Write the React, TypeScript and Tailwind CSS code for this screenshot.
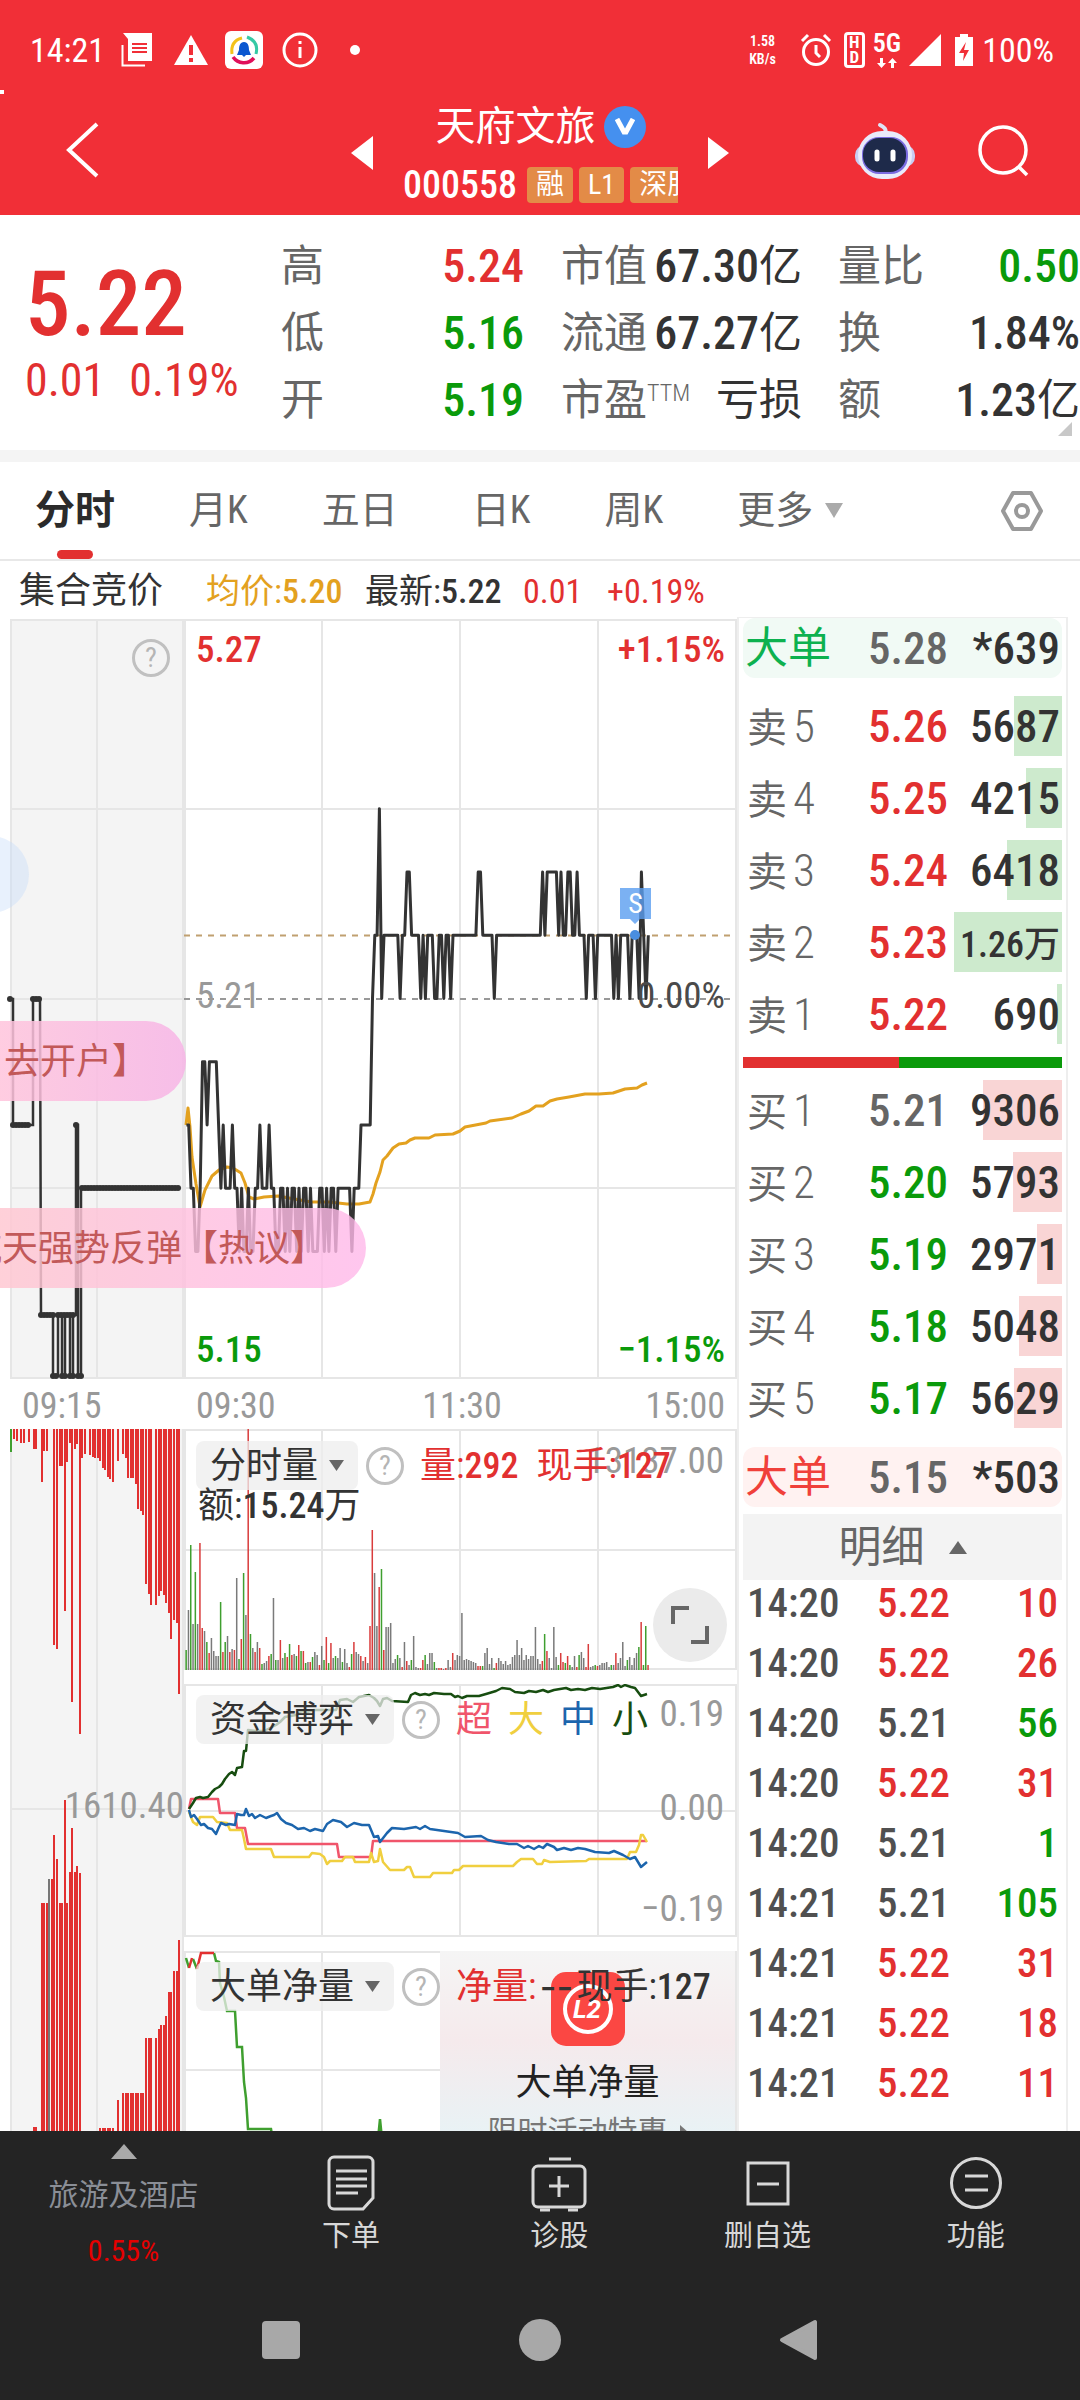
import type { ReactNode } from "react";

const RED = "#e23030";
const INK = "#333333";
const GRID = "#e6e6e6";

const stats = [
  { label: "高", value: "5.24", tone: "text-[#e23030]" },
  { label: "低", value: "5.16", tone: "text-[#0a9a0a]" },
  { label: "开", value: "5.19", tone: "text-[#0a9a0a]" },
];

const capStats = [
  { label: "市值", value: "67.30", unit: "亿" },
  { label: "流通", value: "67.27", unit: "亿" },
  { label: "市盈", sup: "TTM", value: "", unit: "亏损" },
];

const tradeStats = [
  { label: "量比", value: "0.50", unit: "", tone: "text-[#0a9a0a]" },
  { label: "换", value: "1.84%", unit: "", tone: "text-[#333333]" },
  { label: "额", value: "1.23", unit: "亿", tone: "text-[#333333]" },
];

const tabs = ["分时", "月K", "五日", "日K", "周K"];

const asks = [
  { label: "卖5", price: "5.26", volume: "5687", depth: 48 },
  { label: "卖4", price: "5.25", volume: "4215", depth: 36 },
  { label: "卖3", price: "5.24", volume: "6418", depth: 55 },
  { label: "卖2", price: "5.23", volume: "1.26万", depth: 108 },
  { label: "卖1", price: "5.22", volume: "690", depth: 5 },
];

const bids = [
  { label: "买1", price: "5.21", volume: "9306", depth: 79 },
  { label: "买2", price: "5.20", volume: "5793", depth: 49 },
  { label: "买3", price: "5.19", volume: "2971", depth: 25 },
  { label: "买4", price: "5.18", volume: "5048", depth: 43 },
  { label: "买5", price: "5.17", volume: "5629", depth: 48 },
];

const ticks = [
  { time: "14:20", price: "5.22", volume: 10, side: "buy" },
  { time: "14:20", price: "5.22", volume: 26, side: "buy" },
  { time: "14:20", price: "5.21", volume: 56, side: "sell" },
  { time: "14:20", price: "5.22", volume: 31, side: "buy" },
  { time: "14:20", price: "5.21", volume: 1, side: "sell" },
  { time: "14:21", price: "5.21", volume: 105, side: "sell" },
  { time: "14:21", price: "5.22", volume: 31, side: "buy" },
  { time: "14:21", price: "5.22", volume: 18, side: "buy" },
  { time: "14:21", price: "5.22", volume: 11, side: "buy" },
];

// one digit per minute from 09:30, in ticks of 0.01 above 5.15
const minutePrices =
  "4433223554" + "5555434333" + "4332322322" + "3343334332" + "2332323323" +
  "2332322233" + "2323323333" + "3323334444" + "4677967777" + "7776778877" +
  "7767677766" + "7767767777" + "7777777887" + "7777677777" + "7777777777" +
  "7777787888" + "8878778877" + "8777677767" + "7777776767" + "7776777687" + "67";

const TICK = 63.25;
const minuteX = (m: number) => 2.4 + m * 2.298;
const pricePoints = minutePrices
  .split("")
  .map((t, m) => `${minuteX(m).toFixed(1)},${(759 - Number(t) * TICK).toFixed(1)}`)
  .join(" ");

const averagePoints =
  "2,506 4,489 6,508 8,538 12,565 16,588 21,571 28,557 35,551 43,548 49,549 57,554 61,564 65,578 70,580 80,578 94,577 127,583 145,583 163,585 175,585 186,583 189,575 192,564 196,553 199,541 203,537 209,529 215,525 222,524 226,521 231,519 245,519 251,516 269,515 276,512 281,508 302,504 306,502 328,499 337,495 345,492 352,487 359,487 366,482 373,480 385,478 401,475 415,475 429,474 441,470 453,469 458,466 463,464";

// colour letter and bar height for each minute
const minuteVolumes =
  "g20 k60 g125 k46 g98 k46 r127 r42 k39 g28 r17 k32 k19 k14 k14 g68 r18 g28 k34 r18 k21 r20 k92 g11 r31 g97 k55 r241 g36 k22 r18 k28 r22 g6 k7 k9 r14 g16 k72 g10 " +
  "k10 r30 k12 g17 r13 g26 r15 k16 g14 r25 g19 r19 g7 k8 r8 g13 k18 k15 r5 k24 g10 r33 g7 r27 k12 g14 k12 k22 g8 k21 k7 r3 g16 r28 k18 k16 r14 k9 r13 k7 " +
  "r44 r140 k97 k44 r83 g101 r20 k43 k43 k47 k7 k11 g15 k12 r3 k28 r9 k5 g10 k34 k3 k2 r2 r10 g15 k6 k17 k17 g8 k2 r2 r2 k1 r2 k10 k3 r17 k10 k15 k14 " +
  "k57 k10 k11 k10 k9 k8 k7 r4 r4 g4 k17 k22 k6 k12 g2 r7 k12 k9 k6 k9 k5 k6 k13 k15 k30 k15 k22 k10 k15 k11 k14 k14 k43 k11 k6 r9 g36 r19 k12 k2 " +
  "k43 k13 g5 r17 r8 g7 r14 g5 k3 k14 r3 g15 k18 k12 r3 r26 k3 k4 g5 r4 k5 k7 k7 k8 k3 g5 k5 r17 k7 k12 k28 k4 g10 k13 k5 k12 k17 g23 r48 g5 g44 r5";

const barColor: Record<string, string> = { r: "#d93c3c", g: "#3f9f2f", k: "#7a7a7a" };

// x position and length of the bars that hang from the top of the auction pane
const auctionTop = [
  [0, 23], [3, 10], [6, 12], [10, 14], [13, 14], [18, 13], [23, 20], [25, 20], [31, 53], [33, 22], [36, 22],
  [43, 216], [46, 220], [49, 37], [51, 37], [54, 182], [56, 33], [59, 14], [61, 273], [64, 20], [66, 15], [69, 305],
  [71, 29], [74, 25], [79, 26], [82, 28], [84, 29], [87, 29], [89, 32], [92, 39], [94, 41], [97, 48], [99, 50], [102, 53],
  [107, 32], [112, 25], [115, 29], [117, 49], [120, 49], [122, 49], [125, 55], [127, 80], [130, 82], [132, 86],
  [135, 155], [138, 165], [140, 176], [145, 176], [148, 167], [150, 162], [153, 166], [155, 174], [158, 184],
  [160, 210], [163, 191], [166, 194], [168, 265],
];

// x position and height of the bars that stand on its floor
const auctionBottom = [
  [23, 4], [25, 4], [31, 228], [33, 228], [36, 228], [38, 252], [41, 252], [43, 296], [46, 272], [49, 228], [51, 228],
  [54, 331], [56, 228], [59, 259], [61, 303], [64, 259], [66, 265], [69, 258],
  [89, 3], [92, 3], [94, 3], [97, 3], [99, 3], [102, 3], [107, 31],
  [112, 38], [115, 38], [117, 38], [120, 38], [122, 38], [125, 38], [127, 38], [130, 38], [132, 38],
  [135, 93], [138, 93], [140, 93], [145, 93], [148, 102], [150, 106], [153, 106], [155, 115], [158, 139],
  [160, 139], [163, 160], [166, 160], [168, 191],
];

const flowLines = [
  {
    color: "#f0556b",
    points: "5,125 7,115 34,115 36,129 51,129 53,144 61,144 64,160 153,160 155,173 187,173 189,157 463,157",
  },
  {
    color: "#f0cf3f",
    points:
      "5,128 9,138 13,141 16,133 29,133 33,138 43,139 46,146 58,146 60,155 62,165 87,165 90,173 125,173 128,169 136,170 140,173 143,180 146,177 158,177 161,173 169,173 171,178 185,178 187,169 190,178 194,177 196,165 199,178 206,186 220,186 223,183 226,183 230,193 246,193 249,189 268,189 270,186 275,186 279,182 329,182 333,178 337,175 349,175 353,180 358,180 360,176 366,178 402,177 405,175 443,175 446,168 452,168 455,161 457,151 459,151 463,158",
  },
  {
    color: "#1c65ad",
    points:
      "5,126 7,133 10,131 13,135 17,141 20,140 24,144 28,145 32,150 35,143 37,139 42,141 45,140 51,141 53,130 57,131 60,131 62,125 65,132 68,130 71,134 76,131 82,134 87,132 90,131 93,129 97,135 102,139 108,141 114,145 120,144 126,147 131,145 139,147 143,140 149,136 157,138 163,143 170,139 178,141 185,141 190,153 194,152 196,158 203,149 208,144 220,145 232,143 236,145 241,142 246,145 260,147 274,149 281,153 297,152 304,156 312,158 325,160 333,160 340,164 344,162 350,165 355,162 359,164 363,160 370,163 373,166 380,164 387,166 394,164 401,165 411,168 425,169 430,167 439,171 446,175 451,173 457,183 463,178",
  },
  {
    color: "#174d10",
    points:
      "5,125 9,119 12,114 16,113 19,114 24,113 28,108 31,105 35,103 38,100 41,95 45,90 48,88 51,91 53,84 58,83 60,67 62,67 64,46 72,47 80,47 86,44 92,41 96,38 101,33 112,31 118,27 123,28 130,26 142,26 152,26 156,16 163,15 169,18 175,13 180,12 185,11 190,14 193,17 196,22 199,15 203,14 208,17 224,18 227,11 231,9 236,11 241,10 245,11 250,9 260,10 267,10 271,13 274,12 278,14 283,12 295,12 302,10 312,7 318,4 326,5 331,8 340,9 345,7 352,8 359,6 364,8 370,6 376,5 382,4 387,6 394,5 401,6 408,4 416,5 429,3 434,1 437,3 441,1 447,3 451,4 454,8 457,12 460,11 463,10",
  },
];

function Triangle({ dir = "down", className }: { dir?: "up" | "down" | "left" | "right"; className?: string }) {
  const d = {
    up: "M5 0 10 10H0z",
    down: "M0 0h10L5 10z",
    left: "M10 0v10L0 5z",
    right: "M0 0v10l10-5z",
  }[dir];
  return (
    <svg viewBox="0 0 10 10" preserveAspectRatio="none" className={className} fill="currentColor" aria-hidden="true">
      <path d={d} />
    </svg>
  );
}

function Help() {
  return (
    <button
      type="button"
      aria-label="说明"
      className="flex size-[38px] shrink-0 items-center justify-center rounded-full border-[3px] border-[#c0c0c0] text-[28px] leading-none text-[#b5b5b5]"
    >
      ?
    </button>
  );
}

function PaneMenu({ children }: { children: ReactNode }) {
  return (
    <button
      type="button"
      className="flex h-[49px] shrink-0 items-center gap-[11px] rounded-lg bg-[#eeeeee]/75 px-[14px] text-4xl leading-none text-[#333333]"
    >
      {children}
      <Triangle className="h-[11px] w-[15px] text-[#666666]" />
    </button>
  );
}

function Grid({ height, dashed }: { height: number; dashed?: boolean }) {
  return (
    <g stroke={GRID} strokeWidth="2">
      <path d={`M0 1H553M0 ${height - 1}H553M1 0V${height}M138 0V${height}M276 0V${height}M414 0V${height}M552 0V${height}`} />
      <path d={dashed ? `M0 190H553M0 569H553` : `M0 ${Math.round(height / 2)}H553`} />
    </g>
  );
}

function StatusBar() {
  return (
    <div className="flex h-[100px] items-center justify-between pr-[26px] pl-[30px] text-[34px] leading-none">
      <div className="flex items-center">
        <span>14:21</span>
        <svg viewBox="0 0 32 34" className="ml-4 h-[34px] w-8" aria-hidden="true">
          <path d="M2 0h29v28H7V6z" fill="#fff" />
          <path d="M1.500 12v20.500H24" fill="none" stroke="#fff" strokeWidth="2" />
          <path d="M11 11h15M11 15h15M11 19h15" stroke="#f12f37" strokeWidth="2" />
        </svg>
        <svg viewBox="0 0 36 32" className="ml-5 h-8 w-9" aria-hidden="true">
          <path d="M18 1 35 31H1z" fill="#fff" />
          <path d="M18 11v10M18 24v4" stroke="#f12f37" strokeWidth="4" />
        </svg>
        <svg viewBox="0 0 38 38" className="ml-4 size-[38px]" aria-hidden="true">
          <rect width="38" height="38" rx="6" fill="#fff" />
          <path d="M17 7C9 9 6 15 7 23" fill="none" stroke="#f3c21b" strokeWidth="3" />
          <path d="M22 6c8 3 11 9 9 17" fill="none" stroke="#35c9a5" strokeWidth="3" />
          <path d="M8 26c5 7 15 8 21 1" fill="none" stroke="#e0105a" strokeWidth="3.500" />
          <path d="M19 11c4 0 5 4 5 8l2 5h-5l-2 2-2-2h-5l2-5c0-4 1-8 5-8z" fill="#0b57d0" />
        </svg>
        <svg viewBox="0 0 36 36" className="ml-[19px] size-9" fill="none" stroke="#fff" aria-hidden="true">
          <circle cx="18" cy="18" r="16" strokeWidth="3" />
          <path d="M18 15v11M18 9v3" strokeWidth="3" />
        </svg>
        <span className="ml-8 size-[10px] rounded-full bg-white" />
      </div>
      <div className="flex items-center">
        <div className="flex flex-col items-center gap-1 text-sm leading-none font-semibold">
          <span>1.58</span>
          <span>KB/s</span>
        </div>
        <svg viewBox="0 0 32 34" className="ml-6 h-[34px] w-8" fill="none" stroke="#fff" strokeWidth="3" aria-hidden="true">
          <circle cx="16" cy="19" r="12.500" />
          <path d="M16 12v8l4 4M2 8l6-6M30 8l-6-6" />
        </svg>
        <span className="ml-3 flex h-[36px] w-[21px] flex-col items-center justify-center rounded-sm border-[3px] border-white text-[17px] leading-[15px] font-bold">
          <span>H</span>
          <span>D</span>
        </span>
        <span className="ml-2 flex flex-col items-center">
          <span className="text-[26px] leading-[22px] font-semibold">5G</span>
          <svg viewBox="0 0 20 10" className="mt-1 h-[10px] w-5" fill="#fff" aria-hidden="true">
            <path d="M3 0h3v5h3l-4.500 5L0 5h3zM14 10h3V5h3l-4.500-5L11 5h3z" />
          </svg>
        </span>
        <svg viewBox="0 0 32 32" className="ml-2 size-8" fill="#fff" aria-hidden="true">
          <path d="M32 0v32H0z" />
        </svg>
        <svg viewBox="0 0 20 32" className="ml-[13px] h-8 w-5" aria-hidden="true">
          <path d="M6 0h8v3h5v29H1V3h5z" fill="#fff" />
          <path d="M12 8 5 19h5l-1 8 6-11h-5z" fill="#f12f37" />
        </svg>
        <span className="ml-2">100%</span>
      </div>
    </div>
  );
}

function TitleBar() {
  return (
    <div className="flex h-[115px] items-start justify-between pr-[50px] pl-[66px]">
      <button type="button" aria-label="返回" className="flex h-[100px] items-center">
        <svg viewBox="0 0 34 56" className="h-14 w-[34px]" fill="none" stroke="#fff" strokeWidth="4" aria-hidden="true">
          <path d="M31 2 3 28l28 26" />
        </svg>
      </button>
      <div className="flex items-start pl-[126px]">
        <button type="button" aria-label="上一只" className="flex h-[105px] items-center">
          <Triangle dir="left" className="h-[34px] w-[22px]" />
        </button>
        <div className="mx-[30px] flex w-[275px] flex-col items-center">
          <h1 className="flex items-center gap-2 text-[40px] leading-[54px]">
            天府文旅
            <span className="flex size-[42px] items-center justify-center rounded-full bg-[#4590ef]">
              <svg viewBox="0 0 20 18" className="h-[18px] w-5" fill="none" stroke="#fff" strokeWidth="5" aria-hidden="true">
                <path d="M2 1l7 13h2l7-13" />
              </svg>
            </span>
          </h1>
          <div className="flex h-[61px] w-full items-center gap-[6px] overflow-hidden text-[28px] leading-none whitespace-nowrap">
            <span className="mr-1 text-[38px] leading-none font-medium">000558</span>
            <span className="rounded bg-[#e38b47] px-[9px] py-1">融</span>
            <span className="rounded bg-[#e38b47] px-[9px] py-1">L1</span>
            <span className="rounded bg-[#e38b47] px-[9px] py-1">深股通</span>
          </div>
        </div>
        <button type="button" aria-label="下一只" className="flex h-[105px] items-center">
          <Triangle dir="right" className="h-8 w-[21px]" />
        </button>
      </div>
      <div className="flex h-[102px] items-center gap-[62px]">
        <button type="button" aria-label="智能助手">
          <svg viewBox="0 0 62 58" className="h-[58px] w-[62px]" aria-hidden="true">
            <path d="M31 12c2-5-1-7-5-9" fill="none" stroke="#dfe3f5" strokeWidth="4" strokeLinecap="round" />
            <rect x="1" y="23" width="60" height="22" rx="10" fill="#c9cdf2" />
            <rect x="4" y="9" width="54" height="48" rx="24" fill="#e9eafa" />
            <rect x="8" y="15" width="46" height="37" rx="17" fill="#7a6be0" />
            <rect x="9" y="16" width="43" height="34" rx="16" fill="#1e2a4a" />
            <path d="M23 30v7M39 30v7" stroke="#fff" strokeWidth="5" strokeLinecap="round" />
          </svg>
        </button>
        <button type="button" aria-label="搜索">
          <svg viewBox="0 0 52 52" className="size-[52px]" fill="none" stroke="#fff" strokeWidth="3.500" aria-hidden="true">
            <circle cx="25" cy="25" r="23" />
            <path d="M40 41l9 9" />
          </svg>
        </button>
      </div>
    </div>
  );
}

function Quote() {
  return (
    <section className="relative flex h-[235px] items-start pt-[18px] text-[43px] leading-[67px] text-[#666666]">
      <div className="w-[281px] pt-[31px] pl-[25px] text-[#e23030]">
        <p className="text-[91px] leading-[80px] font-medium">5.22</p>
        <p className="flex gap-[24px] text-[46px] leading-[72px]">
          <span>0.01</span>
          <span>0.19%</span>
        </p>
      </div>
      <dl className="w-[243px]">
        {stats.map((s) => (
          <div key={s.label} className="flex justify-between">
            <dt>{s.label}</dt>
            <dd className={`text-[46px] font-medium ${s.tone}`}>{s.value}</dd>
          </div>
        ))}
      </dl>
      <dl className="ml-[37px] w-[241px]">
        {capStats.map((s) => (
          <div key={s.label} className="flex justify-between text-[#333333]">
            <dt className="flex text-[#666666]">
              {s.label}
              {s.sup && <sup className="top-0 text-2xl leading-[52px] font-light">{s.sup}</sup>}
            </dt>
            <dd className="flex">
              <span className="text-[46px] font-medium">{s.value}</span>
              {s.unit}
            </dd>
          </div>
        ))}
      </dl>
      <dl className="ml-9 flex-1">
        {tradeStats.map((s) => (
          <div key={s.label} className="flex justify-between">
            <dt>{s.label}</dt>
            <dd className={`flex ${s.tone}`}>
              <span className="text-[46px] font-medium">{s.value}</span>
              {s.unit}
            </dd>
          </div>
        ))}
      </dl>
      <svg viewBox="0 0 14 14" className="absolute right-2 bottom-[14px] size-[14px]" fill="#c8c8c8" aria-hidden="true">
        <path d="M14 0v14H0z" />
      </svg>
    </section>
  );
}

function Tabs() {
  return (
    <nav className="flex h-[99px] items-stretch justify-between border-b-2 border-[#e8e8e8] pr-[37px] pl-[35px] text-[38px] text-[#666666]">
      <div className="flex gap-[74px]">
        {tabs.map((t, i) => (
          <button
            key={t}
            type="button"
            className={i === 0 ? "relative text-[40px] font-bold text-[#2b2b2b]" : "relative"}
          >
            {t}
            {i === 0 && <span className="absolute bottom-0 left-1/2 h-[9px] w-9 -translate-x-1/2 rounded-full bg-[#e23030]" />}
          </button>
        ))}
        <button type="button" className="flex items-center gap-3">
          更多
          <Triangle className="h-[15px] w-[18px] text-[#aaaaaa]" />
        </button>
      </div>
      <button type="button" aria-label="设置">
        <svg viewBox="0 0 42 40" className="h-10 w-[42px]" fill="none" stroke="#999999" strokeWidth="4" aria-hidden="true">
          <path d="M12 2h18l10 18-10 18H12L2 20z" strokeLinejoin="round" />
          <circle cx="21" cy="20" r="6" />
        </svg>
      </button>
    </nav>
  );
}

function Legend() {
  return (
    <div className="flex h-[58px] items-center pt-[2px] pl-[19px] text-[34px] leading-none whitespace-nowrap text-[#333333]">
      <span className="w-[187px] text-4xl leading-none">集合竞价</span>
      <span className="w-[159px] text-[#e3a11f]">
        均价:<b className="font-medium">5.20</b>
      </span>
      <span className="w-[158px]">
        最新:<b className="font-medium">5.22</b>
      </span>
      <span className="w-[84px] text-[#e23030]">0.01</span>
      <span className="text-[#e23030]">+0.19%</span>
    </div>
  );
}

function AuctionColumn() {
  const dots: ReactNode[] = [];
  const run = (from: number, to: number, y: number) => {
    for (let x = from; x <= to; x += 3) dots.push(<circle key={`${x}-${y}`} cx={x} cy={y} r="3" />);
  };
  run(0, 1, 380);
  run(3, 19, 506);
  run(23, 29, 380);
  run(31, 43, 696);
  run(48, 64, 696);
  run(43, 48, 757);
  run(52, 55, 757);
  run(60, 63, 757);
  run(68, 71, 757);
  run(66, 67, 506);
  run(72, 168, 569);
  return (
    <div className="relative flex w-[184px] shrink-0 flex-col pl-[10px]">
      <svg viewBox="0 0 174 760" preserveAspectRatio="none" className="h-[760px] w-full overflow-visible" aria-hidden="true">
        <rect width="174" height="760" fill="#f4f4f4" />
        <path d="M0 1H174M0 190H174M0 380H174M0 569H174M0 759H174M1 0V760M87 0V760M173 0V760" stroke={GRID} strokeWidth="2" fill="none" />
        <path
          d="M0 380H3V506H23V380H30L31 696H43V757H48V696H52V757H55V696H60V757H63V696H66V506H68V757H71V569H168"
          stroke={INK}
          strokeWidth="2.500"
          fill="none"
        />
        <g fill={INK}>{dots}</g>
      </svg>
      <span className="absolute top-5 right-[14px] flex">
        <Help />
      </span>
      <p className="h-[50px] pt-[2px] pl-[12px] text-4xl leading-[50px] text-[#999999]">09:15</p>
      <div className="relative flex-1">
        <svg viewBox="0 0 174 702" preserveAspectRatio="none" className="block h-[702px] w-full" aria-hidden="true">
          <rect width="174" height="702" fill="#f4f4f4" />
          <path d="M0 380H174M1 0V702M87 0V702M173 0V702" stroke={GRID} strokeWidth="2" fill="none" />
          <g fill={RED}>
            {auctionTop.map(([x, h]) => (
              <rect key={x} x={x} width="2" height={h} fill={x === 0 ? "#3f9f2f" : undefined} />
            ))}
            {auctionBottom.map(([x, h]) => (
              <rect key={x} x={x} y={702 - h} width="2" height={h} fill={x === 38 ? "#777777" : undefined} />
            ))}
          </g>
        </svg>
        <span className="absolute top-[352px] right-0 text-[37px] leading-[50px] text-[#999999]">1610.40</span>
      </div>
    </div>
  );
}

function PricePane() {
  return (
    <div className="relative h-[760px]">
      <svg viewBox="0 0 553 760" preserveAspectRatio="none" className="h-full w-full" fill="none" aria-hidden="true">
        <Grid height={760} dashed />
        <path d="M0 316.500H546" stroke="#c0a070" strokeWidth="2" strokeDasharray="6 6" />
        <path d="M0 380H546" stroke="#999999" strokeWidth="2" strokeDasharray="6 6" />
        <polyline points={averagePoints} stroke="#e3a11f" strokeWidth="3" strokeLinejoin="round" />
        <polyline points={pricePoints} stroke={INK} strokeWidth="3" strokeLinejoin="round" />
        <path d="M436 269h31v31h-11l-5 5-5-5h-10z" fill="#5a9df0" fillOpacity="0.8" />
        <circle cx="451" cy="316" r="5" fill="#4a8ee0" />
      </svg>
      <span className="absolute top-[270px] left-[436px] w-[31px] text-center text-[28px] leading-[30px] text-white">S</span>
      <div className="absolute inset-0 flex flex-col justify-between pt-[7px] pr-[12px] pb-[5px] pl-[12px] text-[37px] leading-[48px]">
        <p className="flex justify-between font-medium text-[#e23030]">
          <span>5.27</span>
          <span>+1.15%</span>
        </p>
        <p className="flex justify-between pb-2 text-[#999999]">
          <span>5.21</span>
          <span className="text-[#4a4a4a]">0.00%</span>
        </p>
        <p className="flex justify-between font-medium text-[#0a9a0a]">
          <span>5.15</span>
          <span>−1.15%</span>
        </p>
      </div>
    </div>
  );
}

function VolumePane() {
  return (
    <div className="relative h-[241px]">
      <svg viewBox="0 0 553 241" preserveAspectRatio="none" className="h-full w-full" fill="none" aria-hidden="true">
        <Grid height={241} />
        {minuteVolumes.split(" ").map((bar, m) => {
          const h = Number(bar.slice(1));
          return <rect key={m} x={minuteX(m) - 1} y={241 - h} width="1.500" height={h} fill={barColor[bar[0]]} />;
        })}
      </svg>
      <span className="absolute top-2 right-[13px] text-[37px] leading-[48px] text-[#999999]">13137.00</span>
      <div className="absolute inset-0 flex flex-col items-start pt-3 pl-3 text-4xl leading-none text-[#333333]">
        <div className="flex items-center text-[#e23030]">
          <PaneMenu>分时量</PaneMenu>
          <span className="ml-2 flex">
            <Help />
          </span>
          <span className="ml-4">
            量:<b className="font-medium">292</b>
          </span>
          <span className="ml-[18px]">
            现手:<b className="font-medium">127</b>
          </span>
        </div>
        <p className="pl-[2px] leading-8">
          额:<b className="font-medium">15.24</b>万
        </p>
      </div>
      <button
        type="button"
        aria-label="全屏"
        className="absolute right-[10px] bottom-2 flex size-[74px] items-center justify-center rounded-full bg-[#ebebeb]"
      >
        <svg viewBox="0 0 38 38" className="size-[38px]" fill="none" stroke="#666" strokeWidth="4" aria-hidden="true">
          <path d="M2 18V2h16M36 20v16H20" />
        </svg>
      </button>
    </div>
  );
}

function FlowPane() {
  return (
    <div className="relative h-[253px]">
      <svg viewBox="0 0 553 253" preserveAspectRatio="none" className="h-full w-full" fill="none" aria-hidden="true">
        <Grid height={253} />
        {flowLines.map((l) => (
          <polyline key={l.color} points={l.points} stroke={l.color} strokeWidth="2.500" strokeLinejoin="round" />
        ))}
      </svg>
      <div className="absolute top-[11px] left-3 flex items-center text-4xl leading-none">
        <PaneMenu>资金博弈</PaneMenu>
        <span className="ml-2 flex">
          <Help />
        </span>
        <span className="ml-4 flex gap-4">
          <span className="text-[#f0556b]">超</span>
          <span className="text-[#f0cf3f]">大</span>
          <span className="text-[#1c65ad]">中</span>
          <span className="text-[#174d10]">小</span>
        </span>
      </div>
      <div className="absolute inset-y-0 right-[13px] flex flex-col justify-between pt-[6px] pb-1 text-right text-[37px] leading-[48px] text-[#999999]">
        <span>0.19</span>
        <span className="pb-2">0.00</span>
        <span>−0.19</span>
      </div>
    </div>
  );
}

function NetPane() {
  return (
    <div className="relative h-[180px] overflow-hidden">
      <svg viewBox="0 0 553 238" preserveAspectRatio="none" className="h-[238px] w-full" fill="none" aria-hidden="true">
        <Grid height={238} />
        <g stroke="#3f9f2f" strokeWidth="2.500">
          <path d="M2 7l3 10M9 8l4 10M30 2l2 8 3 1 1 21 4 14 3 14h8l2 36h5l2 35 2 16 2 31h23l1 6M193 198l3-30 3 30" />
          <path d="M5 17 8 7M13 18l4-16h13" stroke={RED} />
        </g>
      </svg>
      <div className="absolute inset-y-0 right-[2px] flex w-[295px] flex-col items-center bg-linear-to-b from-[#f5f5f5] via-[#f5eaec] via-50% to-[#e9f2f5] pt-[21px] text-4xl leading-none text-[#222222]">
        <svg viewBox="0 0 74 74" className="size-[74px] shrink-0" aria-hidden="true">
          <rect width="74" height="74" rx="15" fill="#fb4743" />
          <circle cx="37" cy="37" r="23" fill="none" stroke="#fff" strokeWidth="4" />
          <text x="36" y="46" textAnchor="middle" fill="#fff" fontSize="26" fontWeight="700" fontStyle="italic" fontFamily="Roboto, sans-serif">
            L2
          </text>
        </svg>
        <p className="mt-[18px] shrink-0 leading-[38px]">大单净量</p>
        <a href="#promo" className="mt-3 flex shrink-0 items-center gap-3 text-[30px] leading-9 whitespace-nowrap text-[#777777]">
          限时活动特惠
          <Triangle dir="right" className="h-[14px] w-2" />
        </a>
      </div>
      <div className="absolute top-[11px] left-3 flex items-center text-4xl leading-none text-[#333333]">
        <PaneMenu>大单净量</PaneMenu>
        <span className="ml-2 flex">
          <Help />
        </span>
        <span className="ml-4 text-[#e23030]">净量:</span>
        <span className="w-10 text-center font-['Inter'] font-medium">--</span>
        <span>
          现手:<b className="font-medium">127</b>
        </span>
      </div>
    </div>
  );
}

function OrderRow({ label, price, volume, depth, side }: { label: string; price: string; volume: string; depth: number; side: "ask" | "bid" }) {
  const tone = price === "5.21" ? "text-[#666666]" : side === "ask" ? "text-[#e23030]" : "text-[#0a9a0a]";
  return (
    <tr className="h-[72px]">
      <td className="pl-1 text-[#666666]">
        <span className="text-[40px] leading-none">{label[0]}</span>
        <span className="ml-[6px] leading-none font-light">{label[1]}</span>
      </td>
      <td className={`font-medium ${tone}`}>{price}</td>
      <td className="relative text-right text-[#333333]">
        <span
          className={`absolute inset-y-[6px] right-0 ${side === "ask" ? "bg-[#cdeacd]" : "bg-[#f9d5d5]"}`}
          style={{ width: depth }}
        />
        <span className={`relative pr-[2px] font-medium ${volume.endsWith("万") ? "text-4xl" : ""}`}>{volume}</span>
      </td>
    </tr>
  );
}

function BigOrder({ side, price, volume }: { side: "ask" | "bid"; price: string; volume: string }) {
  return (
    <div
      className={`flex h-[60px] items-center rounded-xl leading-none ${side === "ask" ? "bg-[#f1faf5] text-[#0db14f]" : "bg-[#fff2f1] text-[#f0403a]"}`}
    >
      <span className="w-[125px] pl-[2px] text-[43px]">大单</span>
      <span className="font-medium text-[#666666]">{price}</span>
      <span className="ml-auto pr-[2px] font-medium text-[#333333]">{volume}</span>
    </div>
  );
}

function OrderBook() {
  return (
    <aside className="-mt-[2px] mr-3 w-[331px] shrink-0 border-x-2 border-t border-[#eeeeee] px-1 text-[45px] leading-none">
      <BigOrder side="ask" price="5.28" volume="*639" />
      <table className="mt-3 w-full table-fixed">
        <colgroup>
          <col className="w-[125px]" />
          <col className="w-[84px]" />
          <col />
        </colgroup>
        <tbody>
          {asks.map((r) => (
            <OrderRow key={r.label} side="ask" {...r} />
          ))}
        </tbody>
      </table>
      <div className="mt-[7px] flex h-[11px] bg-[#0a9a0a]">
        <span className="w-[49%] bg-[#e23030]" />
      </div>
      <table className="mt-[6px] w-full table-fixed">
        <colgroup>
          <col className="w-[125px]" />
          <col className="w-[84px]" />
          <col />
        </colgroup>
        <tbody>
          {bids.map((r) => (
            <OrderRow key={r.label} side="bid" {...r} />
          ))}
        </tbody>
      </table>
      <div className="mt-[13px]">
        <BigOrder side="bid" price="5.15" volume="*503" />
      </div>
      <button type="button" className="mt-[7px] flex h-[66px] w-full items-center justify-center gap-6 bg-[#f3f3f3] text-[43px] text-[#666666]">
        明细
        <Triangle dir="up" className="h-[13px] w-[18px]" />
      </button>
      <table className="w-full table-fixed text-[41px] leading-[46px]">
        <colgroup>
          <col className="w-[134px]" />
          <col className="w-[84px]" />
          <col />
        </colgroup>
        <tbody className="font-medium text-[#505050]">
          {ticks.map((t, i) => (
            <tr key={i} className="h-[60px] align-top">
              <td className="pl-1">{t.time}</td>
              <td className={t.price === "5.22" ? "text-[#e23030]" : ""}>{t.price}</td>
              <td className={`pr-1 text-right ${t.side === "buy" ? "text-[#e23030]" : "text-[#0a9a0a]"}`}>{t.volume}</td>
            </tr>
          ))}
        </tbody>
      </table>
    </aside>
  );
}

function Footer() {
  const items = [
    {
      label: "下单",
      icon: (
        <>
          <path d="M11 3h34a5 5 0 0 1 5 5v36L40 55H11a5 5 0 0 1-5-5V8a5 5 0 0 1 5-5z" />
          <path d="M13 17h31M13 25h31M13 32h31M13 39h22" />
        </>
      ),
    },
    {
      label: "诊股",
      icon: (
        <>
          <rect x="2" y="12" width="52" height="41" rx="5" />
          <path d="M18 5h22M9 56h10M37 56h10M28 22v21M18 32h20" />
        </>
      ),
    },
    {
      label: "删自选",
      icon: (
        <>
          <rect x="8" y="9" width="40" height="41" />
          <path d="M17 30h22" />
        </>
      ),
    },
    {
      label: "功能",
      icon: (
        <>
          <circle cx="28" cy="29" r="24.500" />
          <path d="M17 22h23M17 36h23" />
        </>
      ),
    },
  ];
  return (
    <footer className="flex flex-1 flex-col bg-[#242424] text-[#d8d8d8]">
      <div className="flex h-[154px]">
        <button type="button" className="flex w-[247px] flex-col items-center pt-[13px] text-[30px] leading-none text-[#8a8e96]">
          <Triangle dir="up" className="h-[15px] w-[26px] text-[#aaaaaa]" />
          <span className="mt-[21px]">旅游及酒店</span>
          <span className="mt-[26px] text-[#e60000]">0.55%</span>
        </button>
        {items.map((it) => (
          <button key={it.label} type="button" className="flex flex-1 flex-col items-center pt-[23px] text-[29px] leading-none">
            <svg viewBox="0 0 56 58" className="h-[58px] w-14" fill="none" stroke="#d8d8d8" strokeWidth="3" aria-hidden="true">
              {it.icon}
            </svg>
            <span className="mt-[10px]">{it.label}</span>
          </button>
        ))}
      </div>
      <div className="flex items-center justify-center gap-[217px] pt-[34px] pb-[39px] text-[#a8a8a8]">
        <button type="button" aria-label="最近任务" className="flex size-[42px] items-center justify-center">
          <span className="size-[38px] rounded bg-[#a8a8a8]" />
        </button>
        <button type="button" aria-label="主屏幕" className="size-[42px] rounded-full bg-[#a8a8a8]" />
        <button type="button" aria-label="返回上一级">
          <svg viewBox="0 0 42 42" className="size-[42px]" fill="#a8a8a8" stroke="#a8a8a8" strokeWidth="4" strokeLinejoin="round" aria-hidden="true">
            <path d="M37 3v36L4 21z" />
          </svg>
        </button>
      </div>
    </footer>
  );
}

export default function App() {
  return (
    <div className="relative flex min-h-screen flex-col overflow-hidden bg-white font-['Roboto_Condensed','Noto_Sans_CJK_SC',sans-serif]">
      <header className="relative bg-[#f12f37] text-white">
        <StatusBar />
        <TitleBar />
        <span className="absolute top-[90px] left-0 size-1 bg-white" />
      </header>
      <Quote />
      <div className="h-3 bg-[#f4f4f4]" />
      <Tabs />
      <Legend />
      <main className="relative flex h-[1512px]">
        <AuctionColumn />
        <div className="min-w-0 flex-1">
          <PricePane />
          <div className="flex h-[50px] justify-between px-3 pt-[2px] text-4xl leading-[50px] text-[#999999]">
            <span>09:30</span>
            <span className="pl-[3px]">11:30</span>
            <span>15:00</span>
          </div>
          <VolumePane />
          <div className="mt-[14px]">
            <FlowPane />
          </div>
          <div className="mt-[14px]">
            <NetPane />
          </div>
        </div>
        <OrderBook />
        <span className="absolute top-[217px] -left-12 size-[77px] rounded-full bg-[#c5dbfa]/40" />
        <p className="absolute top-[402px] left-0 h-20 w-[186px] overflow-hidden rounded-r-full bg-linear-to-r from-[#ffc4dc]/85 to-[#f7b4e6]/85 pl-1 text-4xl leading-[82px] whitespace-nowrap text-[#c25959]">
          去开户】
        </p>
        <p className="absolute top-[589px] left-0 flex h-20 w-[366px] justify-end overflow-hidden rounded-r-full bg-linear-to-r from-[#ffc8d2]/85 to-[#ffb8ea]/80 pr-10 text-4xl leading-[82px] whitespace-nowrap text-[#c25959]">
          航天强势反弹【热议】
        </p>
      </main>
      <Footer />
    </div>
  );
}
